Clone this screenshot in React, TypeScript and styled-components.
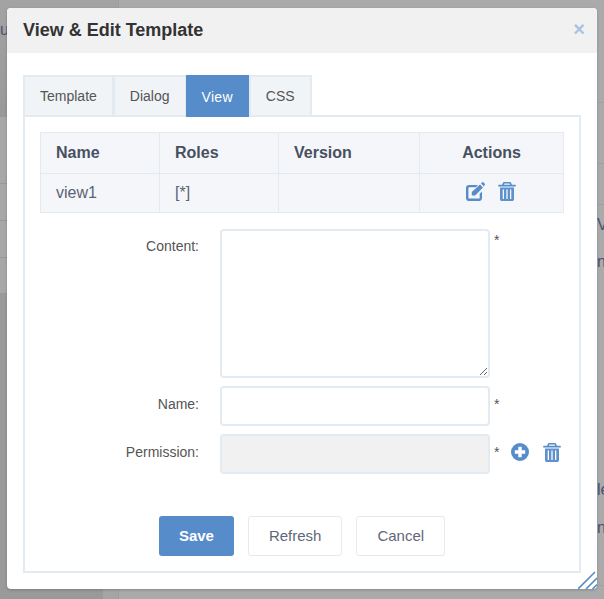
import React from "react";
import styled, { createGlobalStyle } from "styled-components";

const GlobalStyle = createGlobalStyle`
  html, body { margin: 0; padding: 0; height: 100%; overflow: hidden; }
  body { font-family: "Liberation Sans", Arial, sans-serif; color: #555; background: #a6a6a6; }
  * { box-sizing: border-box; }
`;

// the dimmed page behind the dialog
const Page = styled.div`
  height: 599px;
  display: grid;
  grid-template-columns: 119px 1fr;
  background: #a8a8a8;
  overflow: hidden;
`;

const Sidebar = styled.div`
  display: flex;
  flex-direction: column;
  border-right: 1px solid #999ea5;
`;

const SideTop = styled.div`
  height: 117px;
  display: flex;
  flex-direction: column;
  background: linear-gradient(#a3a3a3, #999);
`;

const SideBrand = styled.div`
  height: 47px;
  margin-top: 11px;
  border-top: 1px solid #9fa2a6;
  border-bottom: 1px solid #9a9fa6;
  font-size: 16px;
  line-height: 36px;
  color: #46556f;
`;

const SideItem = styled.div<{ $height: number }>`
  height: ${(p) => p.$height}px;
  background: #a7a7a7;
  border-bottom: 1px solid #979a9d;
`;

const SideRest = styled.div`
  flex: 1;
  background: #9a9a9a;
  display: flex;
  justify-content: flex-end;
`;

const SideScroll = styled.div`
  width: 15px;
  background: #a5a5a5;
`;

const Main = styled.div`
  display: flex;
  flex-direction: column;
  background: #aaa;
`;

const MainRow = styled.div<{ $height: number; $line?: boolean }>`
  height: ${(p) => p.$height}px;
  padding-left: 478px;
  font-size: 16px;
  line-height: ${(p) => p.$height}px;
  white-space: nowrap;
  color: #46556f;
  border-bottom: ${(p) => (p.$line ? "1px solid #9da0a4" : "0")};
`;

const Modal = styled.div`
  position: absolute;
  left: 7px;
  top: 8px;
  width: 590px;
  height: 581px;
  background: #fff;
  border-radius: 4px;
  box-shadow: 0 1px 3px rgba(0, 0, 0, 0.2);
  overflow: hidden;
`;

const Header = styled.div`
  height: 45px;
  background: #f1f1f1;
  display: flex;
  align-items: center;
  justify-content: space-between;
  padding: 0 12px 0 16px;
`;

const Title = styled.h2`
  margin: 0;
  font-size: 18px;
  font-weight: 700;
  color: #333;
`;

const Close = styled.span`
  color: #a9c3e2;
  font-size: 20px;
  font-weight: 700;
  line-height: 1;
  padding-bottom: 4px;
`;

const Body = styled.div`
  padding: 22px 16px 0;
`;

const Tabs = styled.div`
  display: flex;
  height: 42px;
  margin-bottom: -2px;
  position: relative;
`;

const Tab = styled.div<{ $active?: boolean }>`
  height: 42px;
  padding: 0 ${(p) => (p.$active ? "17px 0 16px" : "15px")};
  display: flex;
  align-items: center;
  font-size: 14px;
  letter-spacing: ${(p) => (p.$active ? "0.3px" : "0")};
  color: ${(p) => (p.$active ? "#fff" : "#555")};
  background: ${(p) => (p.$active ? "#568cc9" : "#f0f4f7")};
  border: 2px solid ${(p) => (p.$active ? "#568cc9" : "#e3eaf0")};
  border-left-width: ${(p) => (p.$active ? "0" : "2px")};
  border-right-width: ${(p) => (p.$active ? "0" : "2px")};
  border-bottom-width: ${(p) => (p.$active ? "0" : "2px")};
  & + & { margin-left: -1px; }
  &:last-child { margin-left: 0; }
`;

const TabPanel = styled.div`
  height: 458px;
  border: 2px solid #e3eaf0;
  padding: 15px;
`;

const Table = styled.table`
  width: 523px;
  border-collapse: collapse;
  table-layout: fixed;
  background: #f4f6fa;
  font-size: 16px;
  color: #5b6474;
`;

const Th = styled.th<{ $center?: boolean; $width: number }>`
  width: ${(p) => p.$width}px;
  height: 41px;
  border: 1px solid #e3eaf0;
  padding: 0 15px;
  font-weight: 700;
  color: #47505f;
  text-align: ${(p) => (p.$center ? "center" : "left")};
`;

const Td = styled.td<{ $center?: boolean }>`
  height: 39px;
  border: 1px solid #e3eaf0;
  padding: 0 15px;
  text-align: ${(p) => (p.$center ? "center" : "left")};
`;

const IconRow = styled.div`
  display: flex;
  justify-content: center;
  align-items: center;
  gap: 13px;
  padding-bottom: 3px;
  margin-left: -1px;
`;

const Form = styled.div`
  margin-top: 16px;
  display: grid;
  grid-template-columns: 159px 270px 1fr;
  column-gap: 21px;
  row-gap: 8px;
`;

const Label = styled.label<{ $top: number }>`
  font-size: 14px;
  color: #555;
  text-align: right;
  padding-top: ${(p) => p.$top}px;
`;

const Control = styled.div`
  display: flex;
`;

const Required = styled.div<{ $top: number }>`
  display: flex;
  align-items: flex-start;
  margin-left: -17px;
  padding-top: ${(p) => p.$top}px;
  font-size: 14px;
  color: #555;
`;

const RowIcons = styled.div`
  display: flex;
  gap: 14px;
  margin: -1px 0 0 12px;
`;

const TextArea = styled.textarea`
  width: 270px;
  height: 149px;
  border: 2px solid #e3eaf0;
  border-radius: 4px;
  background: #fff;
  outline: none;
  display: block;
`;

const Input = styled.input<{ $disabled?: boolean }>`
  width: 270px;
  height: 40px;
  border: 2px solid #e3eaf0;
  border-radius: 4px;
  background: ${(p) => (p.$disabled ? "#f1f1f1" : "#fff")};
  outline: none;
`;

const Buttons = styled.div`
  margin-top: 42px;
  display: flex;
  justify-content: center;
  gap: 14px;
`;

const Button = styled.button<{ $primary?: boolean }>`
  height: 40px;
  padding: 0 20px 1px;
  font-family: inherit;
  font-size: 15px;
  font-weight: ${(p) => (p.$primary ? 700 : 400)};
  color: ${(p) => (p.$primary ? "#fff" : "#5f6878")};
  background: ${(p) => (p.$primary ? "#568cc9" : "#fff")};
  border: ${(p) => (p.$primary ? "0" : "1px solid #e3eaf0")};
  border-radius: 3px;
`;

const SaveButton = styled(Button)`
  width: 75px;
`;

const Grip = styled.svg`
  position: absolute;
  right: 0;
  bottom: 0;
`;

const EditIcon = () => (
  <svg width="19" height="19" viewBox="0 0 19 19" fill="#568cc9">
    <path d="M2.800 3H12l-2.200 2.300H3.300c-.5 0-.9.400-.9.900v9.500c0 .5.400.9.900.9h9.500c.5 0 .9-.400.900-.9v-4l2.300-2.300v6.500c0 1.700-1.300 3-3 3H2.800c-1.600 0-2.800-1.300-2.800-3V6C0 4.300 1.200 3 2.800 3z" />
    <path d="M14 2.500l3 3-7.800 7.900H5.800V10.100zM15 1.500L16.300.2c.3-.3.700-.3 1 0l1.500 1.500c.3.300.3.700 0 1L18 4.500z" />
  </svg>
);

const TrashIcon = () => (
  <svg width="18" height="19" viewBox="0 0 18 19" fill="#568cc9">
    <path fillRule="evenodd" d="M6.300 0h5.400c.8 0 1.300.5 1.500 1.100l.6 1.700h3.300c.4 0 .7.300.7.700v1.100H.2V3.500c0-.4.300-.7.700-.7h3.300l.6-1.700C5 .5 5.500 0 6.300 0zM6 2.800h6l-.4-1.200H6.400z" />
    <path fillRule="evenodd" opacity="0.95" d="M2 5.500h14v11.700c0 1-.8 1.800-1.800 1.800H3.800C2.800 19 2 18.200 2 17.200zM4.700 7.500v9.500h1.300V7.500zM8.350 7.500v9.500h1.300V7.500zM12 7.500v9.500h1.300V7.500z" />
  </svg>
);

const PlusIcon = () => (
  <svg width="18" height="18" viewBox="0 0 18 18" fill="#568cc9">
    <path fillRule="evenodd" d="M9 0a9 9 0 1 1 0 18A9 9 0 0 1 9 0zM7.300 3.800v3.500H3.800v3.400h3.500v3.500h3.400v-3.500h3.500V7.300h-3.500V3.800z" />
  </svg>
);

const App = () => {
  return (
    <>
      <GlobalStyle />
      <Page>
        <Sidebar>
          <SideTop>
            <SideBrand>u</SideBrand>
          </SideTop>
          <SideItem $height={67} />
          <SideItem $height={37} />
          <SideItem $height={37} />
          <SideItem $height={36} />
          <SideRest>
            <SideScroll />
          </SideRest>
        </Sidebar>
        <Main>
          <MainRow $height={47} />
          <MainRow $height={56} $line />
          <MainRow $height={61} $line />
          <MainRow $height={41} $line />
          <MainRow $height={40}>V</MainRow>
          <MainRow $height={34}>n</MainRow>
          <MainRow $height={192} />
          <MainRow $height={38}>le</MainRow>
          <MainRow $height={38}>nt</MainRow>
          <MainRow $height={39} $line />
        </Main>
      </Page>
      <Modal>
        <Header>
          <Title>View &amp; Edit Template</Title>
          <Close>×</Close>
        </Header>
        <Body>
          <Tabs>
            <Tab>Template</Tab>
            <Tab>Dialog</Tab>
            <Tab $active>View</Tab>
            <Tab>CSS</Tab>
          </Tabs>
          <TabPanel>
            <Table>
              <thead>
                <tr>
                  <Th $width={119}>Name</Th>
                  <Th $width={119}>Roles</Th>
                  <Th $width={141}>Version</Th>
                  <Th $width={144} $center>Actions</Th>
                </tr>
              </thead>
              <tbody>
                <tr>
                  <Td>view1</Td>
                  <Td>[*]</Td>
                  <Td />
                  <Td $center>
                    <IconRow>
                      <EditIcon />
                      <TrashIcon />
                    </IconRow>
                  </Td>
                </tr>
              </tbody>
            </Table>
            <Form>
              <Label $top={9}>Content:</Label>
              <Control><TextArea /></Control>
              <Required $top={3}>*</Required>
              <Label $top={10}>Name:</Label>
              <Control><Input /></Control>
              <Required $top={10}>*</Required>
              <Label $top={10}>Permission:</Label>
              <Control><Input $disabled disabled /></Control>
              <Required $top={10}>
                <span>*</span>
                <RowIcons>
                  <PlusIcon />
                  <TrashIcon />
                </RowIcons>
              </Required>
            </Form>
            <Buttons>
              <SaveButton $primary>Save</SaveButton>
              <Button>Refresh</Button>
              <Button>Cancel</Button>
            </Buttons>
          </TabPanel>
        </Body>
        <Grip width="19" height="19" viewBox="0 0 19 19" stroke="#568cc9" strokeWidth="1.6">
          <path d="M0 19L17 2M8 19L19 8M14.500 19L19 14.500" />
        </Grip>
      </Modal>
    </>
  );
};

export default App;
